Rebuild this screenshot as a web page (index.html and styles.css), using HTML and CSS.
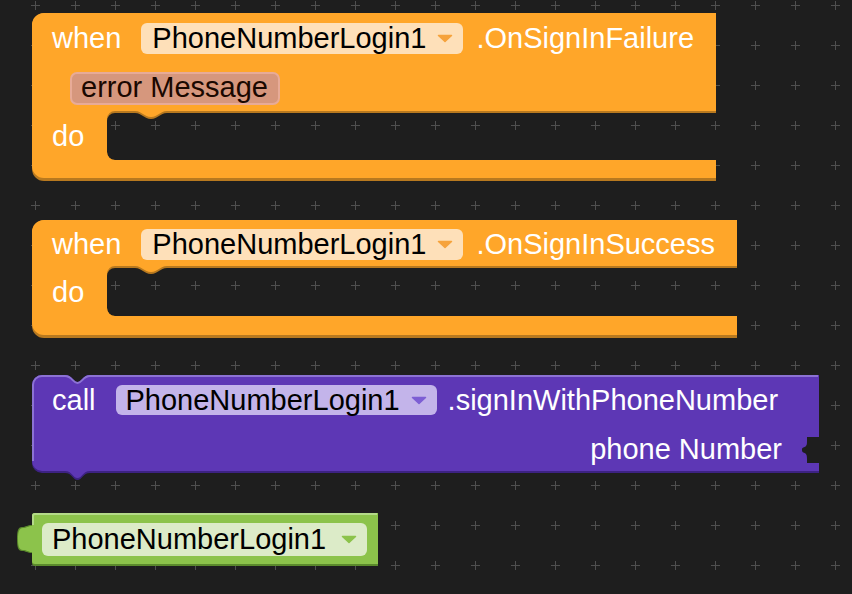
FILE: index.html
```html
<!DOCTYPE html>
<html lang="en">
<head>
  <meta charset="UTF-8" />
  <title>Blocks</title>
  <link rel="stylesheet" href="styles.css">
</head>
<body>
  <div class="workspace">

    <!-- grid of crosses behind the blocks -->
    <svg class="grid" width="852" height="594">
      <defs>
        <pattern id="cross" width="40" height="40" patternUnits="userSpaceOnUse">
          <path d="M31,5.5 H40 M35.5,1 V10" stroke="#4f4f4f" stroke-width="1" />
        </pattern>
      </defs>
      <rect width="852" height="594" fill="url(#cross)" />
    </svg>

    <!-- when .OnSignInFailure -->
    <div class="block event b-fail">
      <svg class="shape" width="684" height="168">
        <path class="edge" d="M0,12 A12,12 0 0 1 12,0 H684 V100 H135 C128,100 126,106 119,106 C112,106 110,100 103,100 H83 A8,8 0 0 0 75,108 V139 A8,8 0 0 0 83,147 H684 V168 H12 A12,12 0 0 1 0,156 Z" />
        <path class="fill" d="M0,12 A12,12 0 0 1 12,0 H684 V98 H135 C128,98 126,104 119,104 C112,104 110,98 103,98 H83 A8,8 0 0 0 75,106 V139 A8,8 0 0 0 83,147 H684 V165 H12 A12,12 0 0 1 0,153 Z" />
      </svg>
      <div class="row head">
        <span class="label">when</span>
        <span class="field">PhoneNumberLogin1<svg class="arrow" viewBox="0 0 16 9"><path d="M1.5,1.5 H14.5 L8,7.5 Z" /></svg></span>
        <span class="label name">.OnSignInFailure</span>
      </div>
      <div class="row args">
        <span class="param">error Message</span>
      </div>
      <div class="row mouth mouth-fail">
        <span class="label">do</span>
      </div>
    </div>

    <!-- when .OnSignInSuccess -->
    <div class="block event b-ok">
      <svg class="shape" width="705" height="118">
        <path class="edge" d="M0,12 A12,12 0 0 1 12,0 H705 V48 H135 C128,48 126,54 119,54 C112,54 110,48 103,48 H83 A8,8 0 0 0 75,56 V88 A8,8 0 0 0 83,96 H705 V118 H12 A12,12 0 0 1 0,106 Z" />
        <path class="fill" d="M0,12 A12,12 0 0 1 12,0 H705 V46 H135 C128,46 126,52 119,52 C112,52 110,46 103,46 H83 A8,8 0 0 0 75,54 V88 A8,8 0 0 0 83,96 H705 V115 H12 A12,12 0 0 1 0,103 Z" />
      </svg>
      <div class="row head head-ok">
        <span class="label">when</span>
        <span class="field">PhoneNumberLogin1<svg class="arrow" viewBox="0 0 16 9"><path d="M1.5,1.5 H14.5 L8,7.5 Z" /></svg></span>
        <span class="label name">.OnSignInSuccess</span>
      </div>
      <div class="row mouth mouth-ok">
        <span class="label">do</span>
      </div>
    </div>

    <!-- call .signInWithPhoneNumber -->
    <div class="block method b-call">
      <svg class="shape" width="787" height="98">
        <path class="edge" d="M0,10 A10,10 0 0 1 10,0 H33 C40,0 41,7 45.5,7 C50,7 51,0 58,0 H787 V62 H775 V66 C775,75 770,70 770,75 C770,80 775,75 775,84 V88 H787 V98 H58 C51,98 50,105 45.5,105 C41,105 40,98 33,98 H10 A10,10 0 0 1 0,88 Z" />
        <path class="fill" d="M0,10 A10,10 0 0 1 10,0 H33 C40,0 41,7 45.5,7 C50,7 51,0 58,0 H787 V62 H775 V66 C775,75 770,70 770,75 C770,80 775,75 775,84 V88 H787 V96 H58 C51,96 50,103 45.5,103 C41,103 40,96 33,96 H10 A10,10 0 0 1 0,86 Z" />
        <path class="hi" d="M1,86 V10 A9,9 0 0 1 10,1 H33 C40,1 41,8 45.5,8 C50,8 51,1 58,1 H786" />
      </svg>
      <div class="row head">
        <span class="label">call</span>
        <span class="field">PhoneNumberLogin1<svg class="arrow" viewBox="0 0 16 9"><path d="M1.5,1.5 H14.5 L8,7.5 Z" /></svg></span>
        <span class="label method-name">.signInWithPhoneNumber</span>
      </div>
      <div class="row input">
        <span class="label">phone Number</span>
      </div>
    </div>

    <!-- component getter -->
    <div class="block component b-comp">
      <svg class="shape" width="346" height="53">
        <path class="edge" d="M0,3 A3,3 0 0 1 3,0 H346 V53 H3 A3,3 0 0 1 0,50 V40 C-5,40 -6,38 -10,38 C-14,38 -15,34 -15,26 C-15,18 -14,14 -10,14 C-6,14 -5,12 0,12 Z" />
        <path class="fill" d="M0,3 A3,3 0 0 1 3,0 H346 V51 H3 A3,3 0 0 1 0,48 V39 C-4,39 -5,37 -9,37 C-13,37 -14,33 -14,26 C-14,19 -13,15 -9,15 C-5,15 -4,13 0,13 Z" />
        <path class="hi" d="M1,12 V3 A2,2 0 0 1 3,1 H345" />
      </svg>
      <div class="row comp">
        <span class="field">PhoneNumberLogin1<svg class="arrow" viewBox="0 0 16 9"><path d="M1.5,1.5 H14.5 L8,7.5 Z" /></svg></span>
      </div>
    </div>

  </div>
</body>
</html>
```

FILE: styles.css
```css
* {
  margin: 0;
  padding: 0;
  box-sizing: border-box;
}

body {
  background: #1e1e1e;
  font-family: "Liberation Sans", Arial, sans-serif;
}

.workspace {
  position: relative;
  width: 852px;
  height: 594px;
  overflow: hidden;
  background: #1e1e1e;
}

.grid {
  position: absolute;
  top: 0;
  left: 0;
}

/* blocks sit on the canvas at their own spot */
.block {
  position: absolute;
  color: #fff;
  font-size: 29px;
}

.shape {
  position: absolute;
  top: 0;
  left: 0;
  overflow: visible;
}

.shape .hi {
  fill: none;
  stroke-width: 2;
}

.row {
  position: relative;
  display: flex;
  align-items: center;
  padding-left: 20px;
  white-space: nowrap;
}

.label {
  line-height: 1;
}

.field {
  display: inline-flex;
  align-items: center;
  height: 31px;
  padding: 0 10px 0 11px;
  margin-left: 20px;
  border-radius: 6px;
  color: #000;
  line-height: 1;
}

.arrow {
  width: 16px;
  height: 9px;
  margin-left: 11px;
}

.arrow path {
  stroke-width: 1.5;
  stroke-linejoin: round;
}

/* event blocks */
.event .edge { fill: #b8791f; }
.event .fill { fill: #ffa629; }
.event .field { background: #fee0b9; }
.event .arrow path { fill: #f6a33c; stroke: #f6a33c; }

.b-fail {
  left: 32px;
  top: 13px;
  width: 684px;
  height: 168px;
}

.b-ok {
  left: 32px;
  top: 220px;
  width: 705px;
  height: 118px;
}

.head {
  height: 50px;
}

.head-ok {
  height: 48px;
}

.name {
  margin-left: 13px;
}

.args {
  height: 50px;
  padding-left: 38px;
}

.param {
  display: inline-flex;
  align-items: center;
  height: 33px;
  padding: 0 10px 1px 9px;
  border: 2px solid #e8ab97;
  border-radius: 7px;
  background: #d6977d;
  color: #1a0800;
  line-height: 1;
}

.mouth-fail {
  height: 47px;
}

.mouth-ok {
  height: 48px;
}

/* method call block */
.method .edge { fill: #3d2283; }
.method .fill { fill: #5d37b5; }
.method .hi { stroke: #8c72d4; }
.method .field { background: #c3b4ea; height: 30px; padding-left: 10px; }
.method .arrow path { fill: #7d5ed4; stroke: #7d5ed4; }

.b-call {
  left: 32px;
  top: 375px;
  width: 787px;
  height: 98px;
}

.method-name {
  margin-left: 11px;
}

.input {
  height: 48px;
  justify-content: flex-end;
  padding-right: 37px;
}

/* component getter block */
.component .edge { fill: #5b8a2c; }
.component .fill { fill: #8cc34b; }
.component .hi { stroke: #b4da88; }
.component .field { background: #dcebc8; height: 33px; margin-left: 0; padding-left: 10px; }
.component .arrow { margin-left: 15px; }
.component .arrow path { fill: #8cc34b; stroke: #8cc34b; }

.b-comp {
  left: 32px;
  top: 513px;
  width: 346px;
  height: 53px;
}

.comp {
  height: 53px;
  padding-left: 10px;
}
```
